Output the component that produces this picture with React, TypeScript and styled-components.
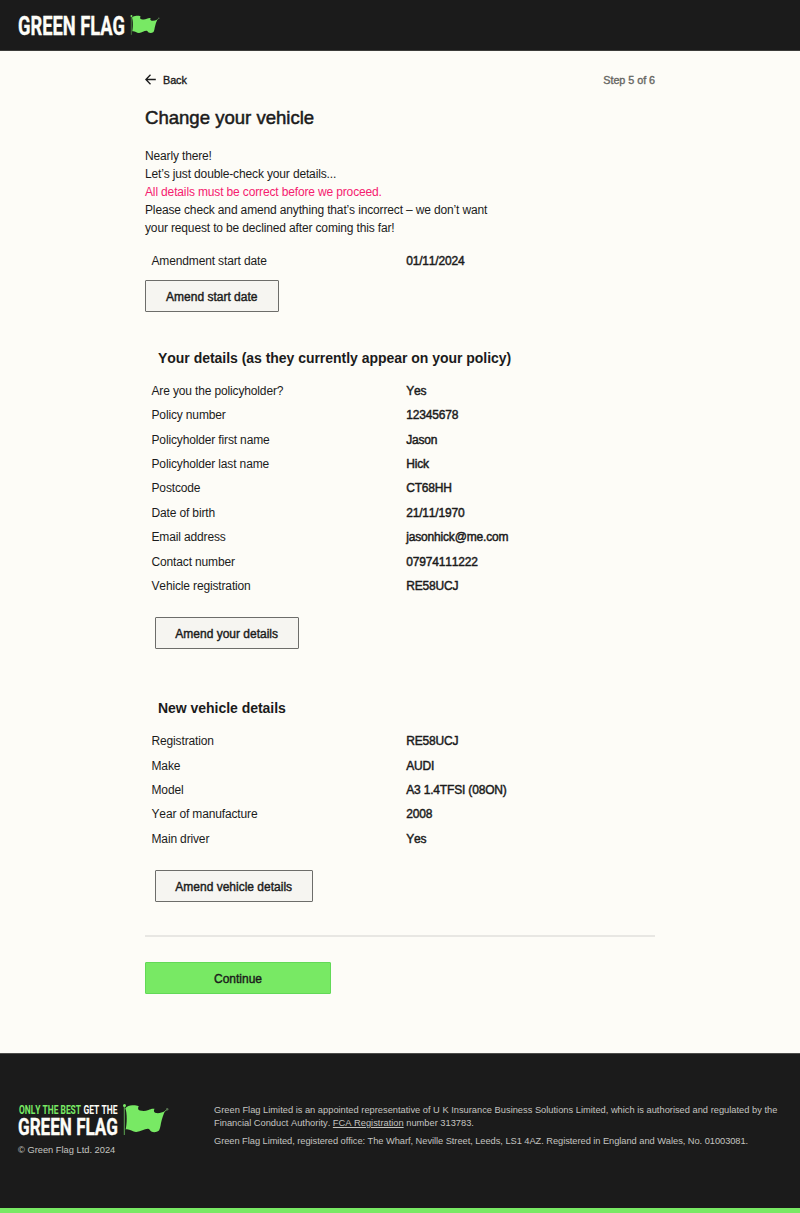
import React from 'react';
import styled, { createGlobalStyle } from 'styled-components';

const GlobalStyle = createGlobalStyle`
  * { box-sizing: border-box; }
  body {
    margin: 0;
    background: #fdfcf7;
    color: #1b1b1b;
    font-family: "Liberation Sans", Arial, sans-serif;
    font-size: 12px;
    line-height: 18px;
    letter-spacing: -0.145px;
    font-kerning: none;
  }
  h1, h2, p, dl, dt, dd { margin: 0; }
`;

const Page = styled.div`
  display: flex;
  flex-direction: column;
  height: 1213px;
`;

const Header = styled.header`
  height: 51px;
  padding: 9px 0 0 18px;
  background: #1b1b1b;
  border-bottom: 1px solid #3c3c3a;
`;

const Main = styled.main`
  width: 510px;
  height: 1002px;
  margin-left: 145px;
  padding-top: 20px;
`;

const TopBar = styled.div`
  display: flex;
  justify-content: space-between;
  align-items: center;
  height: 17px;
  font-size: 10.8px;
  letter-spacing: -0.05px;
`;

const BackLink = styled.a`
  display: flex;
  align-items: center;
  gap: 7px;
  -webkit-text-stroke: 0.35px currentColor;
`;

const Step = styled.span`
  color: #666662;
  -webkit-text-stroke: 0.35px currentColor;
`;

const Title = styled.h1`
  margin-top: 17px;
  font-size: 18.6px;
  line-height: 26px;
  font-weight: 400;
  letter-spacing: -0.02px;
  -webkit-text-stroke: 0.5px currentColor;
`;

const Intro = styled.p`
  margin-top: 16px;
`;

const Warning = styled.span`
  color: #f5206f;
`;

const SectionTitle = styled.h2<{ $top: number }>`
  margin: ${(p) => p.$top}px 0 11.8px 13px;
  font-size: 14px;
  line-height: 18px;
  font-weight: 700;
  letter-spacing: -0.03px;
`;

const Details = styled.dl<{ $top?: number }>`
  margin-top: ${(p) => p.$top ?? 0}px;
`;

const DetailRow = styled.div`
  display: grid;
  grid-template-columns: 254.7px 1fr;
  align-items: center;
  height: 24.38px;
  padding-left: 6.5px;
`;

const Value = styled.dd`
  letter-spacing: -0.17px;
  -webkit-text-stroke: 0.45px currentColor;
`;

const OutlineButton = styled.button<{ $width: number; $top: number; $left?: number }>`
  display: block;
  width: ${(p) => p.$width}px;
  height: 32px;
  margin: ${(p) => p.$top}px 0 0 ${(p) => p.$left ?? 0}px;
  padding: 2px 0 0;
  border: 1.3px solid #6d6d6a;
  border-radius: 1px;
  background: #f6f5f1;
  color: #1b1b1b;
  font: inherit;
  letter-spacing: 0;
  -webkit-text-stroke: 0.4px currentColor;
`;

const ContinueButton = styled(OutlineButton)`
  border: 1.5px solid #62d957;
  background: #78e964;
`;

const Divider = styled.div`
  height: 2px;
  margin-top: 33px;
  background: #e8e7e3;
`;

const Footer = styled.footer`
  display: flex;
  flex: 1;
  padding: 49px 0 0 18px;
  background: #1b1b1b;
  border-top: 1px solid #4c4c4a;
  border-bottom: 5px solid #78e964;
  color: #c4c4c0;
  font-size: 9.3px;
  line-height: 12.5px;
  letter-spacing: 0;
`;

const Brand = styled.div`
  width: 196px;
`;

const Copyright = styled.p`
  margin-top: 3px;
`;

const Legal = styled.div`
  padding-top: 1px;
  white-space: nowrap;
  p + p { margin-top: 6px; letter-spacing: -0.05px; }
`;

const Logo = styled.svg`
  display: block;
  overflow: visible;
  letter-spacing: 0;
`;

const LogoText = styled.text`
  font-family: Roboto, "Liberation Sans", sans-serif;
  font-weight: 700;
  stroke-width: 0.35px;
`;

const Tagline = styled(LogoText)`
  stroke-width: 0;
`;

const FlagShape = () => (
  <>
    <path d="M1.300 1V31" stroke="#5da552" strokeWidth="1" />
    <path
      d="M2.300 4.200C4 2 8 .8 10.500 1.300C12.500 1.500 14 1.300 15.800 2.200C14.500 4 15 6 17 6.600C20.500 7.400 22.500 7.200 25.500 6C27.500 5.200 29 4.300 31.500 4.800C30.300 7 31 8.500 33 9C36 9.500 39 8.700 42 7C40.300 10.500 39 14.500 38 19C37.500 22 37 24.500 36 26.500C33.500 28.500 30.500 28.500 28.300 27.500C26.800 26.500 27 25 25.200 24.700C21.500 24.500 18 27.500 13.300 28C9.500 28.200 6.500 24.500 2.700 25.500C4 20 4.300 9 2.300 4.200Z"
      fill="#78e964"
    />
    <circle cx="1.500" cy="1.600" r="1.500" fill="#78e964" />
    <path d="M41.500 7.500L44 5.500" stroke="#78e964" strokeWidth="0.7" />
    <circle cx="44.200" cy="5.200" r="1.200" fill="#56704f" />
  </>
);

const HeaderLogo = () => (
  <Logo width="144" height="34" viewBox="0 0 144 34" role="img" aria-label="Green Flag">
    <LogoText x="0" y="26" fill="#fdfcf7" stroke="#fdfcf7" fontSize="26.4" textLength="107" lengthAdjust="spacingAndGlyphs">GREEN FLAG</LogoText>
    <g transform="translate(112.500 6) scale(.64)"><FlagShape /></g>
  </Logo>
);

const FooterLogo = () => (
  <Logo width="156" height="38" viewBox="0 0 156 38" role="img" aria-label="Only the best get the Green Flag">
    <Tagline x="1" y="10.500" fill="#78e964" fontSize="12" textLength="62" lengthAdjust="spacingAndGlyphs">ONLY THE BEST</Tagline>
    <Tagline x="65.500" y="10.500" fill="#fdfcf7" fontSize="12" textLength="34" lengthAdjust="spacingAndGlyphs">GET THE</Tagline>
    <LogoText x="0" y="31.500" fill="#fdfcf7" stroke="#fdfcf7" fontSize="24" textLength="100" lengthAdjust="spacingAndGlyphs">GREEN FLAG</LogoText>
    <g transform="translate(105 1)"><FlagShape /></g>
  </Logo>
);

const BackArrow = () => (
  <svg width="11" height="11" viewBox="0 0 11 11" fill="none" stroke="#1b1b1b" strokeWidth="1.300">
    <path d="M10.800 5.500H1M5.500 0.800L0.900 5.500L5.500 10.200" />
  </svg>
);

const policyDetails = [
  ['Are you the policyholder?', 'Yes'],
  ['Policy number', '12345678'],
  ['Policyholder first name', 'Jason'],
  ['Policyholder last name', 'Hick'],
  ['Postcode', 'CT68HH'],
  ['Date of birth', '21/11/1970'],
  ['Email address', 'jasonhick@me.com'],
  ['Contact number', '07974111222'],
  ['Vehicle registration', 'RE58UCJ'],
];

const vehicleDetails = [
  ['Registration', 'RE58UCJ'],
  ['Make', 'AUDI'],
  ['Model', 'A3 1.4TFSI (08ON)'],
  ['Year of manufacture', '2008'],
  ['Main driver', 'Yes'],
];

const DetailList = ({ rows, top }: { rows: string[][]; top?: number }) => (
  <Details $top={top}>
    {rows.map(([label, value]) => (
      <DetailRow key={label}>
        <dt>{label}</dt>
        <Value>{value}</Value>
      </DetailRow>
    ))}
  </Details>
);

export default function App() {
  return (
    <>
      <GlobalStyle />
      <Page>
        <Header><HeaderLogo /></Header>
        <Main>
          <TopBar>
            <BackLink><BackArrow />Back</BackLink>
            <Step>Step 5 of 6</Step>
          </TopBar>
          <Title>Change your vehicle</Title>
          <Intro>
            Nearly there!<br />
            Let’s just double-check your details...<br />
            <Warning>All details must be correct before we proceed.</Warning><br />
            Please check and amend anything that’s incorrect – we don’t want<br />
            your request to be declined after coming this far!
          </Intro>
          <DetailList rows={[['Amendment start date', '01/11/2024']]} top={12} />
          <OutlineButton $width={133.5} $top={6.6}>Amend start date</OutlineButton>

          <SectionTitle $top={37}>Your details (as they currently appear on your policy)</SectionTitle>
          <DetailList rows={policyDetails} />
          <OutlineButton $width={144} $top={19} $left={9.7}>Amend your details</OutlineButton>

          <SectionTitle $top={50}>New vehicle details</SectionTitle>
          <DetailList rows={vehicleDetails} />
          <OutlineButton $width={158} $top={19} $left={9.7}>Amend vehicle details</OutlineButton>

          <Divider />
          <ContinueButton $width={186} $top={25}>Continue</ContinueButton>
        </Main>
        <Footer>
          <Brand>
            <FooterLogo />
            <Copyright>© Green Flag Ltd. 2024</Copyright>
          </Brand>
          <Legal>
            <p>
              Green Flag Limited is an appointed representative of U K Insurance Business Solutions Limited, which is authorised and regulated by the<br />
              Financial Conduct Authority. <u>FCA Registration</u> number 313783.
            </p>
            <p>Green Flag Limited, registered office: The Wharf, Neville Street, Leeds, LS1 4AZ. Registered in England and Wales, No. 01003081.</p>
          </Legal>
        </Footer>
      </Page>
    </>
  );
}
